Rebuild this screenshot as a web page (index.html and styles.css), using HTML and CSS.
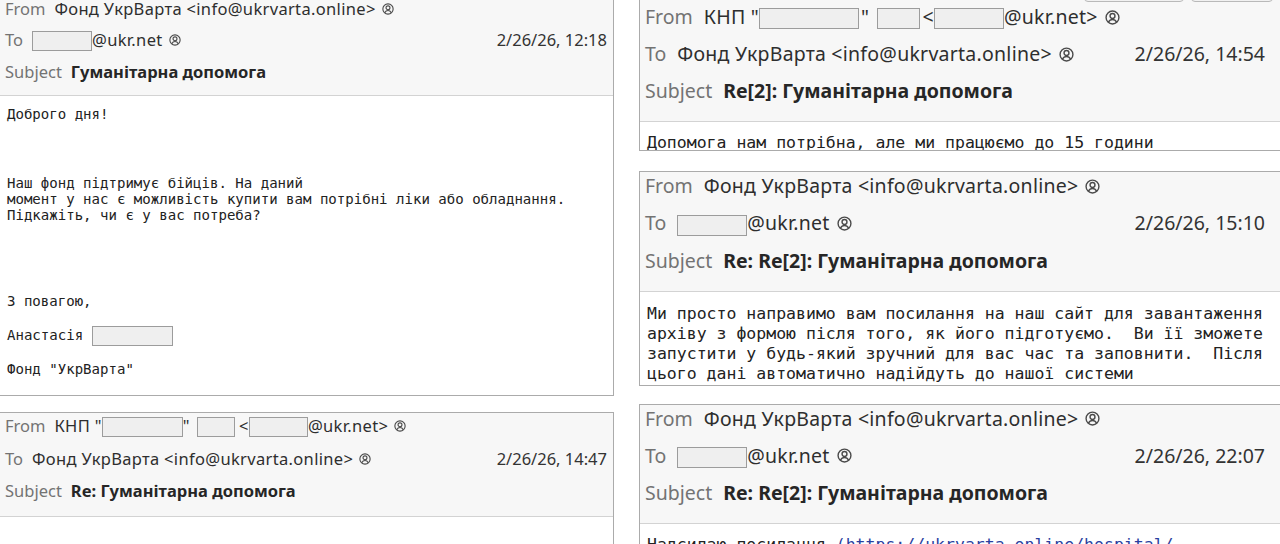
FILE: index.html
```html
<!DOCTYPE html>
<html lang="uk">
<head>
<meta charset="utf-8">
<title>Листування</title>
<link rel="stylesheet" href="styles.css">
</head>
<body>
<div class="sheet">
  <div class="col col-left">
    <section class="msg msg-s">
      <header class="msg-head">
        <div class="row"><span class="lbl">From</span><span class="val">Фонд УкрВарта &lt;info@ukrvarta.online&gt;</span><svg class="who" viewBox="0 0 14 14"><circle cx="7" cy="7" r="6"/><circle cx="7" cy="5.6" r="2.3"/><path d="M3.2 11.3c.9-1.7 2.2-2.5 3.8-2.5s2.9.8 3.8 2.5"/></svg></div>
        <div class="row"><span class="lbl">To</span><span class="val"><span class="mask m-s60"></span>@ukr.net</span><svg class="who" viewBox="0 0 14 14"><circle cx="7" cy="7" r="6"/><circle cx="7" cy="5.6" r="2.3"/><path d="M3.2 11.3c.9-1.7 2.2-2.5 3.8-2.5s2.9.8 3.8 2.5"/></svg><span class="date">2/26/26, 12:18</span></div>
        <div class="row"><span class="lbl">Subject</span><span class="subj">Гуманітарна допомога</span></div>
      </header>
      <div class="msg-body">
        <p>Доброго дня!</p>
        <p class="sp-a">Наш фонд підтримує бійців. На даний<br>момент у нас є можливість купити вам потрібні ліки або обладнання.<br>Підкажіть, чи є у вас потреба?</p>
        <p class="sp-b">З повагою,</p>
        <p class="sp-c">Анастасія <span class="mask m-b80"></span></p>
        <p class="sp-c">Фонд "УкрВарта"</p>
      </div>
    </section>

    <section class="msg msg-s msg-loose">
      <header class="msg-head">
        <div class="row"><span class="lbl">From</span><span class="val">КНП "<span class="mask m-s81"></span>" <span class="mask m-s38"></span> &lt;<span class="mask m-s59"></span>@ukr.net&gt;</span><svg class="who" viewBox="0 0 14 14"><circle cx="7" cy="7" r="6"/><circle cx="7" cy="5.6" r="2.3"/><path d="M3.2 11.3c.9-1.7 2.2-2.5 3.8-2.5s2.9.8 3.8 2.5"/></svg></div>
        <div class="row"><span class="lbl">To</span><span class="val">Фонд УкрВарта &lt;info@ukrvarta.online&gt;</span><svg class="who" viewBox="0 0 14 14"><circle cx="7" cy="7" r="6"/><circle cx="7" cy="5.6" r="2.3"/><path d="M3.2 11.3c.9-1.7 2.2-2.5 3.8-2.5s2.9.8 3.8 2.5"/></svg><span class="date">2/26/26, 14:47</span></div>
        <div class="row"><span class="lbl">Subject</span><span class="subj">Re: Гуманітарна допомога</span></div>
      </header>
      <div class="msg-body body-open"></div>
    </section>
  </div>

  <div class="col col-right">
    <section class="msg msg-l">
      <header class="msg-head">
        <div class="toolbar"><span class="tb-btn tb-a"></span><span class="tb-btn tb-b"></span></div>
        <div class="row"><span class="lbl">From</span><span class="val">КНП "<span class="mask m-l100"></span>" <span class="mask m-l43"></span>&lt;<span class="mask m-l70"></span>@ukr.net&gt;</span><svg class="who" viewBox="0 0 14 14"><circle cx="7" cy="7" r="6"/><circle cx="7" cy="5.6" r="2.3"/><path d="M3.2 11.3c.9-1.7 2.2-2.5 3.8-2.5s2.9.8 3.8 2.5"/></svg></div>
        <div class="row"><span class="lbl">To</span><span class="val">Фонд УкрВарта &lt;info@ukrvarta.online&gt;</span><svg class="who" viewBox="0 0 14 14"><circle cx="7" cy="7" r="6"/><circle cx="7" cy="5.6" r="2.3"/><path d="M3.2 11.3c.9-1.7 2.2-2.5 3.8-2.5s2.9.8 3.8 2.5"/></svg><span class="date">2/26/26, 14:54</span></div>
        <div class="row"><span class="lbl">Subject</span><span class="subj">Re[2]: Гуманітарна допомога</span></div>
      </header>
      <div class="msg-body body-1">Допомога нам потрібна, але ми працюємо до 15 години</div>
    </section>

    <section class="msg msg-l">
      <header class="msg-head">
        <div class="row"><span class="lbl">From</span><span class="val">Фонд УкрВарта &lt;info@ukrvarta.online&gt;</span><svg class="who" viewBox="0 0 14 14"><circle cx="7" cy="7" r="6"/><circle cx="7" cy="5.6" r="2.3"/><path d="M3.2 11.3c.9-1.7 2.2-2.5 3.8-2.5s2.9.8 3.8 2.5"/></svg></div>
        <div class="row"><span class="lbl">To</span><span class="val"><span class="mask m-l70"></span>@ukr.net</span><svg class="who" viewBox="0 0 14 14"><circle cx="7" cy="7" r="6"/><circle cx="7" cy="5.6" r="2.3"/><path d="M3.2 11.3c.9-1.7 2.2-2.5 3.8-2.5s2.9.8 3.8 2.5"/></svg><span class="date">2/26/26, 15:10</span></div>
        <div class="row"><span class="lbl">Subject</span><span class="subj">Re: Re[2]: Гуманітарна допомога</span></div>
      </header>
      <div class="msg-body body-4">Ми просто направимо вам посилання на наш сайт для завантаження
архіву з формою після того, як його підготуємо.  Ви її зможете
запустити у будь-який зручний для вас час та заповнити.  Після
цього дані автоматично надійдуть до нашої системи</div>
    </section>

    <section class="msg msg-l msg-last">
      <header class="msg-head">
        <div class="row"><span class="lbl">From</span><span class="val">Фонд УкрВарта &lt;info@ukrvarta.online&gt;</span><svg class="who" viewBox="0 0 14 14"><circle cx="7" cy="7" r="6"/><circle cx="7" cy="5.6" r="2.3"/><path d="M3.2 11.3c.9-1.7 2.2-2.5 3.8-2.5s2.9.8 3.8 2.5"/></svg></div>
        <div class="row"><span class="lbl">To</span><span class="val"><span class="mask m-l70"></span>@ukr.net</span><svg class="who" viewBox="0 0 14 14"><circle cx="7" cy="7" r="6"/><circle cx="7" cy="5.6" r="2.3"/><path d="M3.2 11.3c.9-1.7 2.2-2.5 3.8-2.5s2.9.8 3.8 2.5"/></svg><span class="date">2/26/26, 22:07</span></div>
        <div class="row"><span class="lbl">Subject</span><span class="subj">Re: Re[2]: Гуманітарна допомога</span></div>
      </header>
      <div class="msg-body body-5">Надсилаю посилання <a class="link" href="#">(https://ukrvarta.online/hospital/</a></div>
    </section>
  </div>
</div>
</body>
</html>
```

FILE: styles.css
```css
html, body {
  margin: 0;
  padding: 0;
}

body {
  width: 1280px;
  height: 544px;
  overflow: hidden;
  background: #ffffff;
  font-family: "Noto Sans", "DejaVu Sans", sans-serif;
  color: #2b2b2b;
}

/* two stacks of message views */
.sheet {
  display: grid;
  grid-template-columns: 615px 650px;
  column-gap: 25px;
  margin-left: -1px;
  align-items: start;
}

.col {
  display: flex;
  flex-direction: column;
}

.col-left {
  gap: 16px;
  margin-top: -5px;
}

.col-right {
  gap: 20px;
  margin-top: -28px;
}

/* message view */
.msg {
  border: 1px solid #ababab;
  background: #ffffff;
}

.msg-last {
  margin-top: -2px;
}

.msg-head {
  display: flex;
  flex-direction: column;
  background: #f7f7f7;
  border-bottom: 1px solid #d3d3d3;
}

.row {
  display: flex;
  align-items: center;
  white-space: nowrap;
}

.lbl {
  color: #737373;
}

.val {
  color: #2e2e2e;
}

.subj {
  font-weight: 700;
  color: #262626;
}

.date {
  margin-left: auto;
  color: #333333;
}

.who {
  flex: none;
  fill: none;
  stroke: #4a4a4a;
  stroke-width: 1.3;
}

/* redacted fragments */
.mask {
  display: inline-block;
  box-sizing: border-box;
  background: #efefef;
  border: 1px solid #9c9c9c;
  vertical-align: middle;
}

/* small scale */
.msg-s .msg-head {
  padding: 3px 6px 13px 5px;
  gap: 11px;
  font-size: 16.5px;
  line-height: 20px;
}

.msg-loose .msg-head {
  gap: 12px;
  padding-bottom: 15px;
}

.msg-s .lbl {
  margin-right: 9px;
}

.msg-s .val {
  letter-spacing: 0.33px;
}

.msg-s .who {
  width: 12px;
  height: 12px;
  margin-left: 6px;
}

.msg-s .mask {
  height: 20px;
  margin-top: -2px;
}

.m-s60 { width: 60px; }
.m-s81 { width: 81px; }
.m-s38 { width: 38px; margin-left: 2px; }
.m-s59 { width: 59px; }

.msg-s .msg-body {
  font-family: "DejaVu Sans Mono", "Liberation Mono", monospace;
  font-size: 14.05px;
  line-height: 16px;
  color: #222222;
  padding: 10px 7px 18px;
}

.msg-body p {
  margin: 0;
}

.sp-a { margin-top: 53px !important; }
.sp-b { margin-top: 70px !important; }
.sp-c { margin-top: 18px !important; }

.m-b80 {
  width: 81px;
  height: 19px;
  margin: -3px 0 -3px;
}

.body-open {
  height: 40px;
}

/* large scale */
.msg-l .msg-head {
  padding: 2px 23px 18px 5px;
  gap: 13px;
  font-size: 19.5px;
  line-height: 24px;
}

.msg-l .lbl {
  margin-right: 11px;
}

.msg-l .val {
  letter-spacing: 0.25px;
}

.msg-l .who {
  width: 15px;
  height: 15px;
  margin-left: 7px;
}

.msg-l .mask {
  height: 21px;
}

.m-l100 { width: 100px; margin-right: 2px; }
.m-l43 { width: 43px; margin: 0 3px 0 2px; }
.m-l70 { width: 70px; }

/* buttons of the pane above, only their lower edge shows */
.toolbar {
  display: flex;
  justify-content: flex-end;
  gap: 7px;
  height: 28px;
  margin: -1px -8px -10px 0;
}

.tb-btn {
  display: block;
  box-sizing: border-box;
  border: 1px solid #b9b9b9;
  border-radius: 4px;
  background: #f1f1f1;
}

.tb-a { width: 100px; }
.tb-b { width: 82px; }

.msg-l .msg-body {
  font-family: "DejaVu Sans Mono", "Liberation Mono", monospace;
  font-size: 16.5px;
  line-height: 20.3px;
  color: #222222;
  padding: 11px 7px 0;
  white-space: pre;
  overflow: hidden;
  box-sizing: border-box;
}

.body-1 { height: 28px; }
.body-4 { height: 93px; padding-top: 12px !important; }
.body-5 { height: 40px; }

.link {
  color: #2a3fa0;
  text-decoration: none;
}
```
